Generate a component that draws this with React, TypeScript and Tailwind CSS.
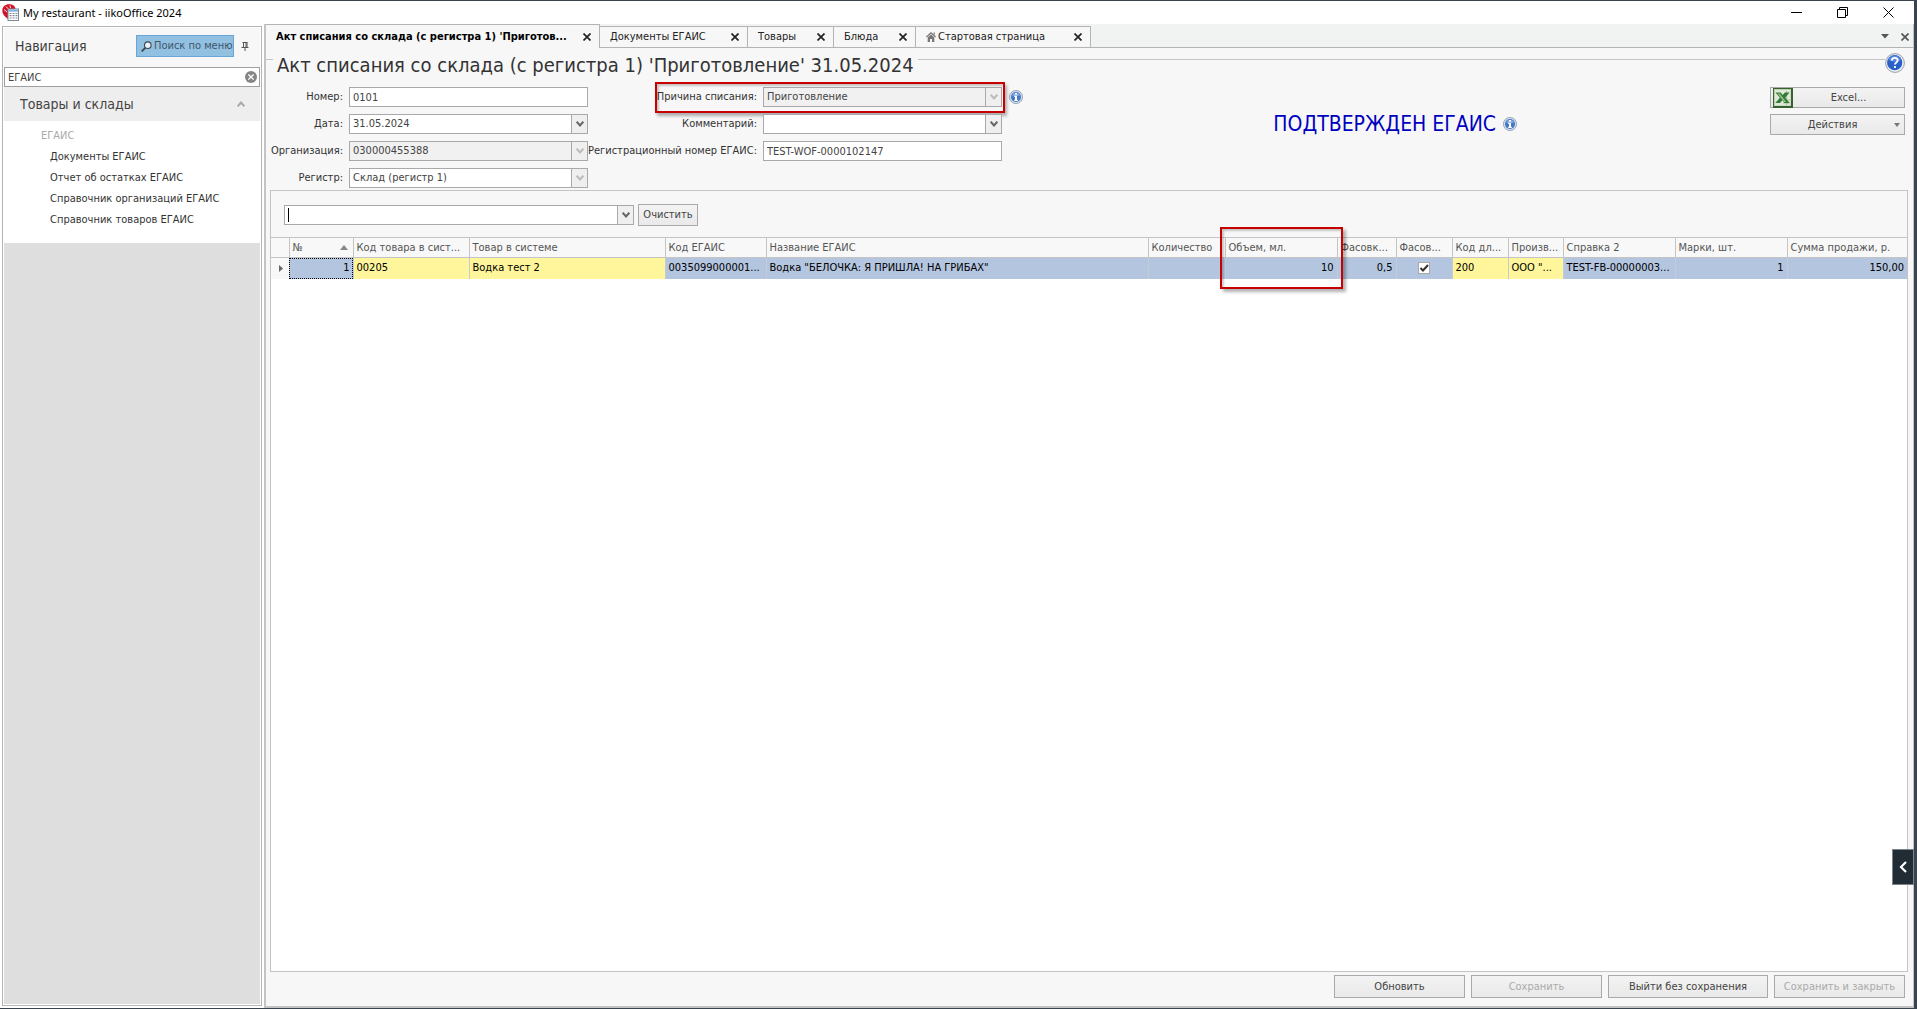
import { useState, type ReactNode } from "react";

function Chevron({ className = "" }: { className?: string }) {
  return (
    <svg viewBox="0 0 8 6" className={"h-[6px] w-[8px] " + className} fill="none" stroke="currentColor" strokeWidth="2">
      <path d="M0.7 0.7 L4 4.4 L7.3 0.7" />
    </svg>
  );
}

function Cross({ className = "h-[8px] w-[8px]" }: { className?: string }) {
  return (
    <svg viewBox="0 0 8 8" className={className} fill="none" stroke="currentColor" strokeWidth="1.7">
      <path d="M0.5 0.5 L7.5 7.5 M7.5 0.5 L0.5 7.5" />
    </svg>
  );
}

function InfoIcon() {
  return (
    <svg viewBox="0 0 14 14" className="h-[14px] w-[14px] shrink-0" aria-label="Информация">
      <circle cx="7" cy="7" r="6.6" fill="#d3dbe8" stroke="#8e9cb4" strokeWidth="0.8" />
      <circle cx="7" cy="7" r="5" fill="#4379c6" />
      <path d="M3 5.2a4.4 4.4 0 0 1 8 0c-2 1-6 1-8 0z" fill="#8bb0e4" />
      <path d="M6 3h2v1.6H6z M5.2 5.7h2.8v4h0.8v1.2H5.2V9.7H6V6.9H5.2z" fill="#fff" />
    </svg>
  );
}

function LogoIcon() {
  return (
    <svg viewBox="0 0 17 17" className="h-[17px] w-[17px] shrink-0">
      <path d="M7 0.3C3 .3.3 3 .3 6.6c0 3.400 2 6 5.700 8.400V5h7.500C13.200 2 10.700.3 7 .3z" fill="#d21226" />
      <path d="M2 5.500 L5 8 M4 2.500 L6.500 5 M8 1.500 L8.500 4" stroke="#fff" strokeWidth="0.9" />
      <rect x="6" y="5" width="10.500" height="11.500" fill="#fff" stroke="#7d8894" strokeWidth="1" />
      <rect x="6.500" y="5.500" width="9.500" height="2.200" fill="#7fb4e0" />
      <path d="M7.500 9.500h2M10.500 9.500h2M13.500 9.500h2M7.500 11.700h2M10.500 11.700h2M13.500 11.700h2M7.500 14h2M10.500 14h2M13.500 14h2" stroke="#7c8794" strokeWidth="1.200" />
    </svg>
  );
}

function ExcelIcon() {
  return (
    <svg viewBox="0 0 20 20" className="h-[20px] w-[20px]">
      <rect x="0" y="0" width="20" height="20" fill="#35622f" />
      <rect x="1" y="1" width="17" height="17" fill="#b9cfae" />
      <rect x="2" y="2" width="15.500" height="15.500" fill="#dfe9d8" />
      <path d="M10 12h7M10 15h7M13.500 3v14" stroke="#a8c29c" strokeWidth="1" />
      <path d="M2.500 4.500h5.200l2 2.600 2.200-2.600H16.500l-4.300 5.200 4.500 5.300h-5.200l-2.200-2.800L7 15H2.300l4.600-5.300z" fill="#357a38" />
      <path d="M4.500 5.500h2.200l6.500 8.500h-2.200z" fill="#8fc084" />
    </svg>
  );
}

const box = "h-5 border border-[#a9a9a9] text-[11px] leading-4 text-[#444]";

function TextField({ id, value }: { id: string; value: string }) {
  return <input id={id} defaultValue={value} className={box + " w-[239px] bg-white px-[3px] outline-none"} />;
}

function Combo({ id, value, muted, off }: { id: string; value: string; muted?: boolean; off?: boolean }) {
  return (
    <span className="relative flex w-[239px]">
      <select
        id={id}
        defaultValue={value}
        className={box + " w-full appearance-none pr-5 pl-[3px] outline-none " + (muted ? "bg-[#f1f1f1]" : "bg-white")}
      >
        <option>{value}</option>
      </select>
      <span
        className={
          "pointer-events-none absolute inset-y-px right-px flex w-4 items-center justify-center border-l border-[#a9a9a9] bg-[#efefef] " +
          (off ? "text-[#bbb]" : "text-[#666]")
        }
      >
        <Chevron />
      </span>
    </span>
  );
}

function Label({ id, children }: { id: string; children: ReactNode }) {
  return (
    <label htmlFor={id} className="flex justify-end pr-[6px] whitespace-nowrap">
      {children}
    </label>
  );
}

const tabs = [
  { name: "Документы ЕГАИС", width: "w-[148px]" },
  { name: "Товары", width: "w-[86px]" },
  { name: "Блюда", width: "w-[82px]" },
  { name: "Стартовая страница", width: "w-[175px]", home: true },
];

const navLinks = ["Документы ЕГАИС", "Отчет об остатках ЕГАИС", "Справочник организаций ЕГАИС", "Справочник товаров ЕГАИС"];

type Column = { title: string; value: string; width: string; tone: string; right?: boolean };

const blue = "bg-[#b3c5df]";
const yellow = "bg-[#fff69c]";

const columns: Column[] = [
  { title: "№", value: "1", width: "w-16", tone: blue, right: true },
  { title: "Код товара в сист...", value: "00205", width: "w-[116px]", tone: yellow },
  { title: "Товар в системе", value: "Водка тест 2", width: "w-[196px]", tone: yellow },
  { title: "Код ЕГАИС", value: "0035099000001...", width: "w-[101px]", tone: blue },
  { title: "Название ЕГАИС", value: 'Водка "БЕЛОЧКА: Я ПРИШЛА! НА ГРИБАХ"', width: "", tone: blue },
  { title: "Количество", value: "", width: "w-[77px]", tone: blue, right: true },
  { title: "Объем, мл.", value: "10", width: "w-28", tone: blue, right: true },
  { title: "Фасовк...", value: "0,5", width: "w-[59px]", tone: blue, right: true },
  { title: "Фасов...", value: "check", width: "w-14", tone: blue },
  { title: "Код дл...", value: "200", width: "w-14", tone: yellow },
  { title: "Произв...", value: 'ООО "...', width: "w-[55px]", tone: yellow },
  { title: "Справка 2", value: "TEST-FB-00000003...", width: "w-28", tone: blue },
  { title: "Марки, шт.", value: "1", width: "w-28", tone: blue, right: true },
  { title: "Сумма продажи, р.", value: "150,00", width: "w-[120px]", tone: blue, right: true },
];

const button = "border border-[#a9a9a9] bg-linear-to-b from-[#f3f3f3] to-[#e9e9e9] text-[#444]";

function Sidebar() {
  return (
    <aside className="mt-0.5 mb-0.5 ml-0.5 flex w-[260px] shrink-0 flex-col border border-[#b4b4b4] bg-white p-px">
      <div className="flex h-[39px] items-center bg-[#f7f7f7] pb-[3px] pl-[11px]">
        <h2 className="flex-1 text-[14px] text-[#3c3c3c]">Навигация</h2>
        <button className="flex h-[22px] w-[98px] items-center gap-0.5 border border-[#6aa5da] bg-[#92c0e0] pl-1 whitespace-nowrap text-[#40566b]">
          <svg viewBox="0 0 11 11" className="h-[11px] w-[11px] shrink-0" fill="#e8f3fb" stroke="#3c4650" strokeWidth="1.1">
            <circle cx="6.800" cy="4.200" r="3.300" />
            <path d="M4.300 6.800 L0.700 10.400" strokeWidth="1.800" />
          </svg>
          Поиск по меню
        </button>
        <button aria-label="Закрепить" className="mr-[11px] ml-[7px]">
          <svg viewBox="0 0 8 9" className="h-[9px] w-[8px]" fill="none" stroke="#555" strokeWidth="1">
            <path d="M1.500 0.500h5M2.500 0.500v4.500M5 0.500v4.500M6 0.500v4.500M0.500 5.500h7M4 5.500v3.500" />
          </svg>
        </button>
      </div>
      <div className="relative">
        <input
          aria-label="Поиск по меню"
          defaultValue="ЕГАИС"
          className="block h-5 w-full border border-[#a0a0a0] bg-white px-[3px] text-[11px] text-[#444] outline-none"
        />
        <button
          aria-label="Очистить поиск"
          className="absolute top-1 right-[3px] flex h-3 w-3 items-center justify-center rounded-full bg-[#858585] text-white"
        >
          <Cross className="h-[6px] w-[6px]" />
        </button>
      </div>
      <button className="flex h-[34px] items-center justify-between bg-[#eee] pr-[15px] pl-4 text-[14px] text-[#444]">
        Товары и склады
        <Chevron className="rotate-180 text-[#aaa]" />
      </button>
      <nav className="h-[122px] bg-white pt-1 text-[#333]">
        <p className="pl-[37px] leading-[21px] text-[#aaa]">ЕГАИС</p>
        <ul className="pl-[46px]">
          {navLinks.map((name) => (
            <li key={name} className="h-[21px] leading-[21px]">
              <a href="#">{name}</a>
            </li>
          ))}
        </ul>
      </nav>
      <div className="flex-1 bg-[#dedede]" />
    </aside>
  );
}

function TabStrip() {
  return (
    <div className="flex h-6 shrink-0 bg-[#f1f2f2] text-[#222]">
      <div className="flex w-[334px] items-center border-t border-r border-[#b4b4b4] bg-[#f7f7f7] pr-2 pl-[10px]">
        <span className="flex-1 overflow-hidden font-bold whitespace-nowrap text-black">
          Акт списания со склада (с регистра 1) 'Приготов...
        </span>
        <button aria-label="Закрыть вкладку">
          <Cross />
        </button>
      </div>
      <div className="flex flex-1 border-b border-[#b4b4b4] pt-0.5">
        {tabs.map((tab) => (
          <div
            key={tab.name}
            className={tab.width + " flex shrink-0 items-center border-t border-r border-[#b4b4b4] bg-[#f7f7f7] pr-2 pl-[10px]"}
          >
            {tab.home && (
              <svg viewBox="0 0 10 10" className="mr-0.5 h-[10px] w-[10px]" fill="#777">
                <path d="M5 0 L10 4.600 L9.200 5.500 L5 1.700 L0.800 5.500 L0 4.600z M7.500 0.500h1.300v2.500l-1.300-1.200z M1.700 5.600 L5 2.600 L8.300 5.600V10H6V7H4v3H1.700z" />
              </svg>
            )}
            <span className="flex-1 whitespace-nowrap">{tab.name}</span>
            <button aria-label={"Закрыть " + tab.name}>
              <Cross />
            </button>
          </div>
        ))}
        <div className="flex flex-1 items-center justify-end gap-3 pr-1 text-[#555]">
          <button aria-label="Список вкладок">
            <svg viewBox="0 0 8 5" className="h-[5px] w-[8px]" fill="currentColor">
              <path d="M0 0h8L4 4.500z" />
            </svg>
          </button>
          <button aria-label="Закрыть все">
            <Cross />
          </button>
        </div>
      </div>
    </div>
  );
}

function DocumentForm() {
  return (
    <div className="flex h-[103px] items-start justify-between pr-2 text-[#333]">
      <div className="grid grid-cols-[83px_239px_175px_auto] items-center gap-y-[7px]">
        <Label id="num">Номер:</Label>
        <TextField id="num" value="0101" />
        <Label id="reason">Причина списания:</Label>
        <div className="relative flex items-center gap-[7px]">
          <Combo id="reason" value="Приготовление" muted off />
          <InfoIcon />
          <div className="pointer-events-none absolute -top-[5px] -left-[108px] h-[31px] w-[350px] border-2 border-[#c80000] shadow-[2px_3px_3px_rgba(0,0,0,0.3),inset_2px_2px_2px_rgba(0,0,0,0.2)]" />
        </div>
        <Label id="date">Дата:</Label>
        <Combo id="date" value="31.05.2024" />
        <Label id="comment">Комментарий:</Label>
        <Combo id="comment" value="" />
        <Label id="org">Организация:</Label>
        <Combo id="org" value="030000455388" muted off />
        <Label id="reg">Регистрационный номер ЕГАИС:</Label>
        <TextField id="reg" value="TEST-WOF-0000102147" />
        <Label id="store">Регистр:</Label>
        <Combo id="store" value="Склад (регистр 1)" off />
      </div>
      <div className="flex items-start gap-[253px]">
        <div className="flex items-center gap-[7px] pt-[21px]">
          <span className="text-[21px] leading-8 whitespace-nowrap text-[#0000c0]">ПОДТВЕРЖДЕН ЕГАИС</span>
          <InfoIcon />
        </div>
        <div className="flex w-[135px] flex-col gap-1.5">
          <button className={button + " flex h-[21px] items-center pl-0.5"}>
            <ExcelIcon />
            <span className="flex-1">Excel...</span>
          </button>
          <button className={button + " flex h-[21px] items-center pr-1"}>
            <span className="flex-1">Действия</span>
            <svg viewBox="0 0 6 4" className="h-[4px] w-[6px]" fill="#777">
              <path d="M0 0h6L3 4z" />
            </svg>
          </button>
        </div>
      </div>
    </div>
  );
}

function PackedCheck({ label }: { label: string }) {
  return (
    <span className="relative mx-auto block h-3 w-3">
      <input
        type="checkbox"
        aria-label={label}
        defaultChecked
        className="peer block h-3 w-3 appearance-none border border-[#aaa] bg-white"
      />
      <svg
        viewBox="0 0 12 12"
        className="pointer-events-none absolute inset-0 hidden h-3 w-3 peer-checked:block"
        fill="none"
        stroke="#333"
        strokeWidth="2"
      >
        <path d="M2.500 6 L5 8.500 L10 3" />
      </svg>
    </span>
  );
}

function ItemsTable() {
  return (
    <table className="w-full table-fixed border-collapse">
      <thead>
        <tr className="h-5 border-y border-[#c4c4c4] bg-[#f8f8f8] text-[#555]">
          <th className="w-[18px]" aria-label="Указатель" />
          {columns.map((c, i) => (
            <th key={c.title} className={c.width + " relative border-l border-[#c4c4c4] p-0 pl-[3px] text-left font-normal"}>
              <div className="flex items-center">
                <span className="flex-1 whitespace-nowrap">{c.title}</span>
                {i === 0 && (
                  <svg viewBox="0 0 8 5" className="mr-[5px] h-[5px] w-[8px]" fill="#888">
                    <path d="M0 5h8L4 0z" />
                  </svg>
                )}
              </div>
              {c.title === "Объем, мл." && (
                <div className="pointer-events-none absolute -top-[11px] -left-[6px] z-10 h-[62px] w-[123px] border-2 border-[#c80000] shadow-[3px_3px_3px_rgba(0,0,0,0.3),inset_2px_2px_2px_rgba(0,0,0,0.2)]" />
              )}
            </th>
          ))}
        </tr>
      </thead>
      <tbody>
        <tr className="h-[21px] text-black">
          <td className="bg-[#f8f8f8] p-0">
            <svg viewBox="0 0 4 7" className="ml-2 h-[7px] w-[4px]" fill="#666">
              <path d="M0 0v7l4-3.500z" />
            </svg>
          </td>
          {columns.map((c, i) => (
            <td
              key={c.title}
              className={
                c.tone +
                " border-l border-[#c4cbd6] p-0 leading-5 whitespace-nowrap " +
                (c.right ? "pr-[3px] text-right " : c.value === "check" ? "" : "pl-[3px] ") +
                (i === 0 ? "outline-1 -outline-offset-1 outline-black outline-dotted" : "")
              }
            >
              {c.value === "check" ? <PackedCheck label={c.title} /> : c.value}
            </td>
          ))}
        </tr>
      </tbody>
    </table>
  );
}

function ItemsPanel() {
  const [filter, setFilter] = useState("");
  return (
    <section className="mr-[5px] ml-1 flex flex-1 flex-col border border-[#c4c4c4] bg-white">
      <div className="flex h-[46px] items-center gap-1 bg-[#f7f7f7] pt-px pl-[13px]">
        <div className="relative flex h-5 w-[350px] border border-[#a9a9a9] bg-white">
          <input
            aria-label="Поиск"
            value={filter}
            onChange={(e) => setFilter(e.target.value)}
            className="min-w-0 flex-1 px-1 text-[11px] outline-none"
          />
          <span className="pointer-events-none absolute top-0.5 left-[3px] h-[14px] w-px bg-black" />
          <button aria-label="Открыть список" className="flex w-4 items-center justify-center border-l border-[#a9a9a9] bg-[#efefef] text-[#666]">
            <Chevron />
          </button>
        </div>
        <button onClick={() => setFilter("")} className={button + " h-[22px] w-[60px]"}>
          Очистить
        </button>
      </div>
      <ItemsTable />
    </section>
  );
}

export default function App() {
  return (
    <div className="relative flex h-screen flex-col border-t border-r-[3px] border-b border-[#3a444e] bg-white font-['DejaVu_Sans_Condensed','Noto_Sans',sans-serif] text-[11px] leading-4">
      <header className="flex h-[23px] shrink-0 items-center bg-white pl-0.5 text-black">
        <LogoIcon />
        <span className="ml-1 flex-1 font-['Noto_Sans',sans-serif]">My restaurant - iikoOffice 2024</span>
        <div className="flex items-center gap-[35px] pr-[20px]">
          <button aria-label="Свернуть">
            <svg viewBox="0 0 11 11" className="h-[11px] w-[11px]" stroke="#000"><path d="M0 5.500h11" /></svg>
          </button>
          <button aria-label="Свернуть в окно">
            <svg viewBox="0 0 11 11" className="h-[11px] w-[11px]" fill="none" stroke="#000"><path d="M0.500 2.500h8v8h-8z M2.500 2.500v-2h8v8h-2" /></svg>
          </button>
          <button aria-label="Закрыть">
            <svg viewBox="0 0 11 11" className="h-[11px] w-[11px]" fill="none" stroke="#000"><path d="M0.500 0.500l10 10M10.500 0.500l-10 10" /></svg>
          </button>
        </div>
      </header>
      <div className="flex min-h-0 flex-1">
        <Sidebar />
        <main className="ml-0.5 flex min-w-0 flex-1 flex-col border-r border-b-2 border-l-2 border-[#c4c4c4] bg-[#f7f7f7]">
          <TabStrip />
          <div className="flex h-[39px] shrink-0 items-start">
            <span className="mt-[11px] h-px w-[7px] bg-[#c4c4c4]" />
            <h1 className="mx-1 mt-px text-[20px] leading-8 whitespace-nowrap text-[#333]">
              Акт списания со склада (с регистра 1) 'Приготовление' 31.05.2024
            </h1>
            <span className="mt-[11px] h-px flex-1 bg-[#c4c4c4]" />
            <button aria-label="Справка" className="mt-[5px] mr-2">
              <svg viewBox="0 0 20 20" className="h-[20px] w-[20px]">
                <circle cx="10" cy="10" r="9.400" fill="#eef1f6" stroke="#8d939c" strokeWidth="0.900" />
                <circle cx="9.700" cy="9.700" r="7.600" fill="#2860c8" />
                <path d="M3.500 7a6.600 6.600 0 0 1 12.400 0c-3 2-9.400 2-12.400 0z" fill="#5a8be0" />
                <path d="M6.900 7.500c0-3.500 5.800-3.500 5.800-.2 0 2.200-2.800 2-2.800 4.300M9.900 13v2" fill="none" stroke="#fff" strokeWidth="1.900" />
              </svg>
            </button>
          </div>
          <DocumentForm />
          <ItemsPanel />
          <footer className="flex h-[34px] shrink-0 items-start justify-end gap-[6px] pt-[3px] pr-2">
            <button className={button + " h-[23px] w-[131px]"}>Обновить</button>
            <button disabled className={button + " h-[23px] w-[131px]"}><span className="text-[#aaa]">Сохранить</span></button>
            <button className={button + " h-[23px] w-[160px]"}>Выйти без сохранения</button>
            <button disabled className={button + " h-[23px] w-[131px]"}><span className="text-[#aaa]">Сохранить и закрыть</span></button>
          </footer>
        </main>
      </div>
      <button
        aria-label="Показать панель"
        className="absolute right-0 bottom-[123px] flex h-9 w-[22px] items-center justify-center border border-[#7c848a] bg-[#212c34] text-white"
      >
        <svg viewBox="0 0 8 12" className="h-[12px] w-[8px]" fill="none" stroke="currentColor" strokeWidth="2.200">
          <path d="M7 1 L2 6 L7 11" />
        </svg>
      </button>
    </div>
  );
}
